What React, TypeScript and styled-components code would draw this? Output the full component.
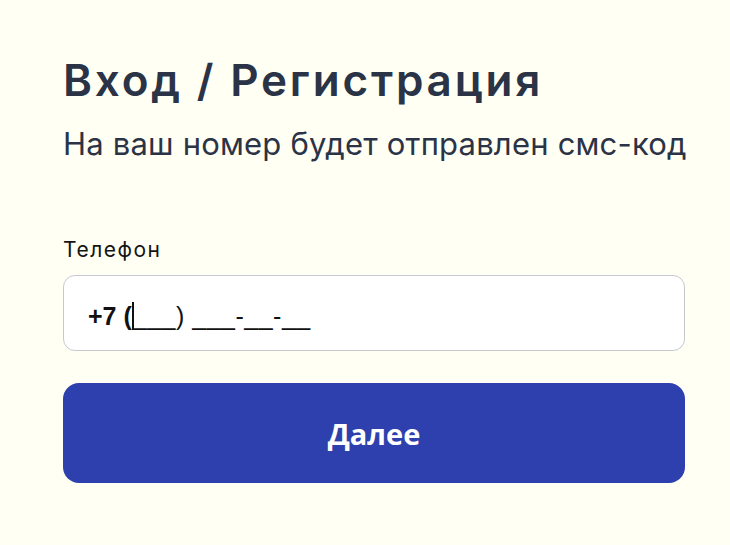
import React from "react";
import styled, { createGlobalStyle } from "styled-components";

const Global = createGlobalStyle`
  html, body { margin: 0; padding: 0; background: #fffff4; }
  body { font-family: Inter, "Noto Sans", sans-serif; }
  * { box-sizing: border-box; }
`;

const Page = styled.div`
  min-height: 545px;
  padding: 52px 0 0 63px;
  background: #fffff4;
`;

const Form = styled.form`
  width: 622px;
  display: flex;
  flex-direction: column;
`;

const Title = styled.h1`
  margin: 0;
  font-family: Inter, "Noto Sans", sans-serif;
  font-weight: 600;
  font-size: 44px;
  line-height: 56px;
  color: #2b3346;
  letter-spacing: 2.8px;
  white-space: nowrap;
`;

const Subtitle = styled.p`
  margin: 16px 0 0;
  font-family: Inter, "Noto Sans", sans-serif;
  font-size: 31px;
  line-height: 40px;
  color: #2b3346;
  letter-spacing: 0.2px;
  white-space: nowrap;
`;

const Label = styled.label`
  margin-top: 74px;
  font-family: Inter, "Noto Sans", sans-serif;
  font-size: 21px;
  line-height: 24px;
  letter-spacing: 1.5px;
  color: #141414;
`;

const Field = styled.div`
  margin-top: 13px;
  height: 76px;
  border: 1.5px solid #c6c8d0;
  border-radius: 12px;
  background: #ffffff;
  display: flex;
  align-items: center;
  padding: 6px 24px 0;
  font-family: "Liberation Sans", Arial, sans-serif;
  font-size: 25px;
  font-weight: 700;
  color: #111;
  white-space: pre;
`;

const Caret = styled.span`
  display: inline-block;
  width: 2px;
  height: 28px;
  background: #111;
  margin: 0 -1px 0 0;
`;

const Mask = styled.span`
  font-weight: 400;
  letter-spacing: 0.5px;
`;

const Button = styled.button`
  margin-top: 32px;
  height: 100px;
  border: none;
  border-radius: 16px;
  background: #2e40ad;
  color: #ffffff;
  font-family: "Open Sans", "Noto Sans", sans-serif;
  font-weight: 700;
  font-size: 29px;
  cursor: pointer;
`;

export default function App() {
  return (
    <>
      <Global />
      <Page>
        <Form onSubmit={(e) => e.preventDefault()}>
          <Title>Вход / Регистрация</Title>
          <Subtitle>На ваш номер будет отправлен смс-код</Subtitle>
          <Label>Телефон</Label>
          <Field>
            +7 (<Caret />
            <Mask>___) ___-__-__</Mask>
          </Field>
          <Button type="submit">Далее</Button>
        </Form>
      </Page>
    </>
  );
}
